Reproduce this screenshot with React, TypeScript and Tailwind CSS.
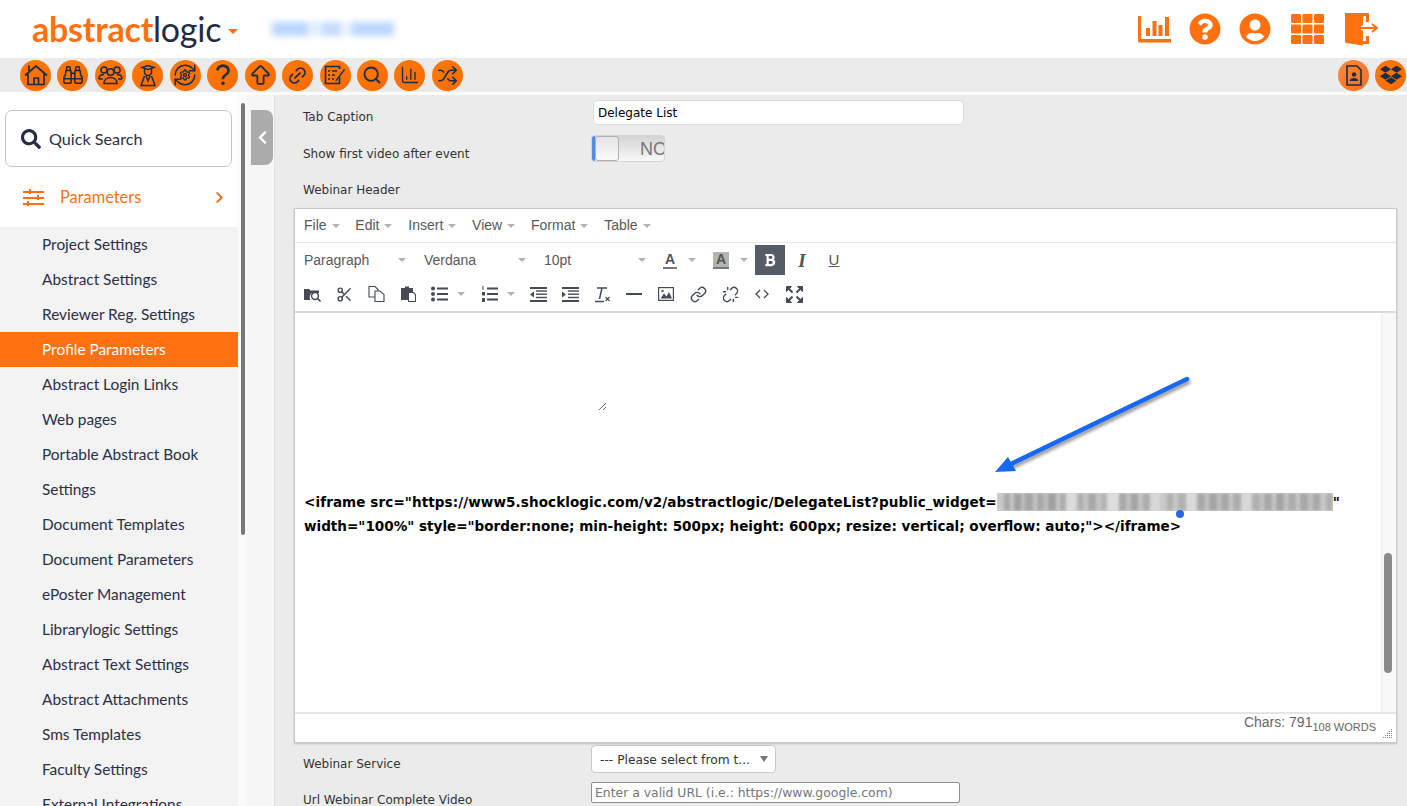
import {
  ArrowBigUp,
  BarChart3,
  Binoculars,
  Link,
  Link2,
  RefreshCw,
  Scissors,
  Search,
  Settings,
  Shuffle,
  Unlink,
} from "lucide-react";
import { FaBold, FaChevronLeft, FaChevronRight, FaDropbox, FaQuestionCircle, FaSearch, FaUserCircle } from "react-icons/fa";
import type { ReactNode } from "react";

const sidebarItems = [
  "Project Settings",
  "Abstract Settings",
  "Reviewer Reg. Settings",
  "Profile Parameters",
  "Abstract Login Links",
  "Web pages",
  "Portable Abstract Book",
  "Settings",
  "Document Templates",
  "Document Parameters",
  "ePoster Management",
  "Librarylogic Settings",
  "Abstract Text Settings",
  "Abstract Attachments",
  "Sms Templates",
  "Faculty Settings",
  "External Integrations",
];

// blurred-out widget id: [width, shade]
const redaction = [
  [6, "bg-[#c8c8c8]"], [4, "bg-[#a8a8a8]"], [3, "bg-[#c8c8c8]"], [5, "bg-[#a0a0a0]"], [3, "bg-[#bebebe]"], [6, "bg-[#a4a4a4]"],
  [3, "bg-[#c4c4c4]"], [5, "bg-[#a8a8a8]"], [3, "bg-[#c0c0c0]"], [6, "bg-[#a0a0a0]"], [3, "bg-[#c8c8c8]"], [4, "bg-[#acacac]"],
  [10, "bg-[#dcdcdc]"], [5, "bg-[#b0b0b0]"], [3, "bg-[#c8c8c8]"], [6, "bg-[#a8a8a8]"], [3, "bg-[#c4c4c4]"], [5, "bg-[#b4b4b4]"],
  [10, "bg-[#dedede]"], [6, "bg-[#a8a8a8]"], [3, "bg-[#c0c0c0]"], [6, "bg-[#a4a4a4]"], [3, "bg-[#c4c4c4]"], [6, "bg-[#acacac]"],
  [8, "bg-[#d8d8d8]"], [6, "bg-[#c8c8c8]"], [4, "bg-[#b0b0b0]"], [4, "bg-[#c8c8c8]"], [6, "bg-[#b0b0b0]"], [10, "bg-[#dadada]"],
  [6, "bg-[#a8a8a8]"], [3, "bg-[#c4c4c4]"], [6, "bg-[#a4a4a4]"], [3, "bg-[#c0c0c0]"], [6, "bg-[#a8a8a8]"], [3, "bg-[#c8c8c8]"],
  [6, "bg-[#acacac]"], [10, "bg-[#d8d8d8]"], [6, "bg-[#b0b0b0]"], [3, "bg-[#c4c4c4]"], [6, "bg-[#a8a8a8]"], [3, "bg-[#c8c8c8]"],
  [6, "bg-[#a4a4a4]"], [3, "bg-[#c4c4c4]"], [6, "bg-[#acacac]"], [3, "bg-[#c8c8c8]"], [6, "bg-[#a8a8a8]"], [3, "bg-[#c0c0c0]"],
  [6, "bg-[#a8a8a8]"], [4, "bg-[#c8c8c8]"], [6, "bg-[#b0b0b0]"],
];

function Round({ children, light }: { children: ReactNode; light?: boolean }) {
  return (
    <div
      className={`flex h-[31px] w-[31px] shrink-0 items-center justify-center rounded-full text-[#1f2a44] ${
        light ? "bg-gradient-to-br from-[#ff8a3c] to-[#f0701f]" : "bg-gradient-to-br from-[#ff7a0a] to-[#f56a00]"
      }`}
    >
      {children}
    </div>
  );
}

function HouseIcon() {
  return (
    <svg width="24" height="22" viewBox="0 0 24 22" fill="none" stroke="currentColor" strokeWidth="1.700" strokeLinejoin="round">
      <path d="M1 11.500 12 2l11 9.500" />
      <path d="M4 9V20.500h16V9" />
      <path d="M5 7V1.500" />
      <path d="M10 20.500V14h4.500v6.500" />
    </svg>
  );
}

function PeopleIcon() {
  return (
    <svg width="25" height="20" viewBox="0 0 25 20" fill="none" stroke="currentColor" strokeWidth="1.600">
      <circle cx="6" cy="5" r="3" />
      <circle cx="19" cy="5" r="3" />
      <circle cx="12.500" cy="7" r="3.300" />
      <path d="M1 14c0-3 2-4.500 5-4.500M24 14c0-3-2-4.500-5-4.500" />
      <path d="M1 14h4M20 14h4" />
      <path d="M6 18.500c0-4 3-6 6.500-6s6.500 2 6.500 6z" />
    </svg>
  );
}

function GradIcon() {
  return (
    <svg width="20" height="23" viewBox="0 0 20 23" fill="none" stroke="currentColor" strokeWidth="1.500">
      <path d="M4 3.500 10 1.500l6 2-6 2z" />
      <path d="M6.500 5v3a3.500 3.500 0 0 0 7 0V5" />
      <path d="M6.500 12 3 21.500h14L13.500 12M8 12l2 5 2-5" />
    </svg>
  );
}

function CogRefresh() {
  return (
    <div className="relative flex h-6 w-6 items-center justify-center">
      <RefreshCw size={26} strokeWidth={1.4} className="absolute -left-[1px] -top-[1px]" />
      <Settings size={12} strokeWidth={2.8} />
    </div>
  );
}

function NoteIcon() {
  return (
    <svg width="22" height="20" viewBox="0 0 22 20" fill="none" stroke="currentColor" strokeWidth="1.600">
      <path d="M15.500 12v6.500H1.500V1.500h14V4" />
      <path d="M4 6h2M8 6h5M4 10h2M8 10h3M4 14h2M8 14h2" />
      <path d="M12 14.500 20 4l1 1-8 10.500-2 1z" fill="currentColor" stroke="none" />
    </svg>
  );
}

function QuestionMark() {
  return (
    <svg width="16" height="22" viewBox="0 0 16 22" fill="none" stroke="currentColor" strokeWidth="2.500">
      <path d="M2.500 6.500a5.500 4.800 0 1 1 8.500 4c-2 1.200-3 2.200-3 4.700" />
      <circle cx="8" cy="19.300" r="1.700" fill="currentColor" stroke="none" />
    </svg>
  );
}

function Caret({ className = "" }: { className?: string }) {
  return <span className={`inline-block h-0 w-0 border-x-[4px] border-t-[4px] border-x-transparent border-t-[#b3b3b3] ${className}`} />;
}

function ToolBtn({ children }: { children: ReactNode }) {
  return <div className="flex h-[30px] w-[32px] shrink-0 items-center justify-center text-[#444b55]">{children}</div>;
}

function FolderSearch() {
  return (
    <svg width="17" height="15" viewBox="0 0 17 15">
      <path d="M0 2h5l1.500 1.500H15V6H8a5 5 0 0 0-1.500 7H0z" fill="#444b55" />
      <circle cx="11" cy="9" r="3.400" fill="none" stroke="#444b55" strokeWidth="1.500" />
      <path d="m13.500 11.500 3 3" stroke="#444b55" strokeWidth="1.700" />
    </svg>
  );
}

function CopyIcon() {
  return (
    <svg width="17" height="16" viewBox="0 0 17 16" fill="#fff" stroke="#444b55" strokeWidth="1.100">
      <path d="M1 .5h6l3 3V11H1z" />
      <path d="M7 5h5l4 3.500v7H7z" />
    </svg>
  );
}

function PasteIcon() {
  return (
    <svg width="15" height="16" viewBox="0 0 15 16">
      <path d="M0 2h4V.5h4V2h4v4H7v8H0z" fill="#444b55" />
      <path d="M7.500 6.500h5l2 2v7h-7z" fill="#fff" stroke="#444b55" strokeWidth="1.100" />
    </svg>
  );
}

function BulletList() {
  return (
    <svg width="17" height="16" viewBox="0 0 17 16" fill="#444b55">
      <circle cx="2" cy="2.500" r="2" />
      <circle cx="2" cy="8" r="2" />
      <circle cx="2" cy="13.500" r="2" />
      <rect x="6" y="1.500" width="11" height="2" />
      <rect x="6" y="7" width="11" height="2" />
      <rect x="6" y="12.500" width="11" height="2" />
    </svg>
  );
}

function NumberList() {
  return (
    <svg width="17" height="16" viewBox="0 0 17 16" fill="#444b55">
      <rect x="1.500" y="0" width="1" height="4" />
      <rect x="1" y="6" width="3" height="3.500" />
      <rect x="1" y="12" width="3" height="4" />
      <rect x="6" y="1.500" width="11" height="2" />
      <rect x="6" y="7" width="11" height="2" />
      <rect x="6" y="12.500" width="11" height="2" />
    </svg>
  );
}

function IndentIcon({ out }: { out?: boolean }) {
  return (
    <svg width="17" height="15" viewBox="0 0 17 15" fill="#444b55">
      <rect x="0" y="0" width="17" height="2" />
      <rect x="6" y="3.300" width="11" height="1.400" />
      <rect x="6" y="6.500" width="11" height="1.400" />
      <rect x="6" y="9.800" width="11" height="1.400" />
      <rect x="0" y="13" width="17" height="2" />
      <path d={out ? "M4 4.500v6l-4-3z" : "M0 4.500v6l4-3z"} />
    </svg>
  );
}

function ClearFormat() {
  return (
    <svg width="17" height="17" viewBox="0 0 17 17" fill="none" stroke="#444b55" strokeWidth="1.500">
      <path d="M3 2h10M8 2 5.500 13" />
      <path d="M1 15.500h9" />
      <path d="m11.500 11 4 4m0-4-4 4" strokeWidth="1.200" />
    </svg>
  );
}

function PictureIcon() {
  return (
    <svg width="16" height="14" viewBox="0 0 16 14">
      <rect x=".6" y=".6" width="14.800" height="12.800" fill="none" stroke="#444b55" strokeWidth="1.200" />
      <path d="M2.500 11.500 6 6.500l2.500 3 2.500-4.500 3 6.500z" fill="#444b55" />
      <circle cx="4.500" cy="4" r="1.200" fill="#444b55" />
    </svg>
  );
}

function CodeIcon() {
  return (
    <svg width="14" height="10" viewBox="0 0 14 10" fill="none" stroke="#444b55" strokeWidth="1.300">
      <path d="M5 1 1 5l4 4M9 1l4 4-4 4" />
    </svg>
  );
}

function FullscreenIcon() {
  return (
    <svg width="17" height="17" viewBox="0 0 17 17" fill="#444b55" stroke="#444b55">
      <path d="M.5.500h5l-5 5z" />
      <path d="M16.500.500h-5l5 5z" />
      <path d="M.5 16.500h5l-5-5z" />
      <path d="M16.500 16.500h-5l5-5z" />
      <path d="m3 3 3.500 3.500M14 3l-3.500 3.500M3 14l3.500-3.500M14 14l-3.500-3.500" strokeWidth="2" />
    </svg>
  );
}

function GridIcon() {
  return (
    <svg width="33" height="30" viewBox="0 0 33 30" fill="#ff7110">
      {[0, 11.500, 23].map((x) =>
        [0, 10.500, 21].map((y) => <rect key={`${x}-${y}`} x={x} y={y} width="10" height="9" rx="1.200" />),
      )}
    </svg>
  );
}

function Door() {
  return (
    <svg width="33" height="33" viewBox="0 0 33 33" fill="#ff7110">
      <path d="M0 0h24v9h-3V3l-3 .5V28h3v-5h3v8h-6v1.500L1 30l-1-1z" />
      <path d="M0 0h18v32L0 29z" />
      <path d="M16 13h15M27 9l5 4-5 4" transform="translate(0 2)" fill="none" stroke="#fff" strokeWidth="5" />
      <path d="M16 13h15M27 9l5 4-5 4" transform="translate(0 2)" fill="none" stroke="#ff7110" strokeWidth="2" />
    </svg>
  );
}

function BarsIcon() {
  return (
    <svg width="33" height="27" viewBox="0 0 33 27" fill="#ff7110">
      <path d="M0 0h3v23h30v3.500H1.500A1.500 1.500 0 0 1 0 25z" />
      <rect x="8" y="12" width="4" height="8" />
      <rect x="14.500" y="5" width="4" height="15" />
      <rect x="20.500" y="9" width="4" height="11" />
      <rect x="27" y="1" width="4" height="19" />
    </svg>
  );
}

function SlidersIcon() {
  return (
    <svg width="21" height="17" viewBox="0 0 21 17" fill="#ff7110">
      <rect x="0" y="2" width="21" height="2" />
      <rect x="0" y="8" width="21" height="2" />
      <rect x="0" y="14" width="21" height="2" />
      <rect x="6" y="0" width="2" height="5" />
      <rect x="14" y="6" width="2" height="5" />
      <rect x="4" y="12" width="2" height="5" />
    </svg>
  );
}

function MenuItem({ label }: { label: string }) {
  return (
    <div className="flex items-center gap-[5px]">
      <span>{label}</span>
      <Caret />
    </div>
  );
}

export default function App() {
  return (
    <div className="flex h-[806px] w-[1407px] flex-col overflow-hidden bg-white font-['Lato',sans-serif]">
      {/* Header */}
      <header className="flex h-[58px] shrink-0 items-center justify-between bg-white pl-[32px] pr-[29px]">
        <div className="flex items-center">
          <div className="text-[34px] leading-none tracking-[-0.23px]">
            <span className="font-bold text-[#ff7110]">abstract</span>
            <span className="text-[#232b45]">logic</span>
          </div>
          <span className="ml-[7px] mt-[4px] h-0 w-0 border-x-[5px] border-t-[5px] border-x-transparent border-t-[#ff7110]" />
          <div className="ml-[34px] flex h-[14px] w-[122px] gap-[2px] blur-[3px]">
            <div className="w-[36px] bg-[#b9d5ff]" />
            <div className="w-[10px] bg-[#dbe9ff]" />
            <div className="w-[20px] bg-[#c3dbff]" />
            <div className="w-[6px] bg-[#e3eeff]" />
            <div className="w-[44px] bg-[#bdd7ff]" />
          </div>
        </div>
        <div className="flex items-center text-[#ff7110]">
          <BarsIcon />
          <FaQuestionCircle size={32} className="ml-[18px]" />
          <FaUserCircle size={32} className="ml-[18px]" />
          <div className="ml-[20px]"><GridIcon /></div>
          <div className="ml-[21px]"><Door /></div>
        </div>
      </header>

      {/* Shortcut bar */}
      <div className="flex h-[34px] shrink-0 items-center justify-between bg-[#ebebeb] pl-[20px] pr-[1px]">
        <div className="flex items-center gap-[6.45px]">
          <Round><HouseIcon /></Round>
          <Round><Binoculars size={22} strokeWidth={1.7} /></Round>
          <Round><PeopleIcon /></Round>
          <Round><GradIcon /></Round>
          <Round><CogRefresh /></Round>
          <Round><QuestionMark /></Round>
          <Round><ArrowBigUp size={25} strokeWidth={1.7} /></Round>
          <Round><Link2 size={21} strokeWidth={2} className="-rotate-45" /></Round>
          <Round><NoteIcon /></Round>
          <Round><Search size={20} strokeWidth={2.2} /></Round>
          <Round><BarChart3 size={20} strokeWidth={1.6} /></Round>
          <Round><Shuffle size={21} strokeWidth={1.8} /></Round>
        </div>
        <div className="flex items-center gap-[6px]">
          <Round light>
            <svg width="16" height="21" viewBox="0 0 16 21" fill="none" stroke="currentColor" strokeWidth="1.600">
              <path d="M1 1h10l4 4v15H1z" />
              <circle cx="8" cy="9.500" r="2.200" fill="currentColor" stroke="none" />
              <path d="M3.500 16c.5-4 8.500-4 9 0z" fill="currentColor" stroke="none" />
            </svg>
          </Round>
          <Round><FaDropbox size={22} /></Round>
        </div>
      </div>
      <div className="h-[3px] shrink-0 bg-white" />

      <div className="flex min-h-0 flex-1">
        {/* Sidebar */}
        <aside className="w-[238px] shrink-0 overflow-hidden bg-white">
          <div className="pl-[5px] pr-[6px] pt-[15px]">
            <div className="flex h-[57px] items-center rounded-[7px] border border-[#c4c4c4] pl-[15px] text-[16.2px] text-[#2a3048]">
              <FaSearch size={20} className="text-[#232b45]" />
              <span className="ml-[8px] pt-[2px]">Quick Search</span>
            </div>
          </div>
          <div className="flex h-[60px] items-center pl-[23px] pr-[12px] text-[16.4px] text-[#ff7110]">
            <SlidersIcon />
            <span className="ml-[16px] flex-1">Parameters</span>
            <FaChevronRight size={13} />
          </div>
          <nav className="bg-[#f3f3f3] text-[15.4px] text-[#2a3048]">
            {sidebarItems.map((item) => (
              <div
                key={item}
                className={`flex h-[35px] items-center pl-[42px] ${item === "Profile Parameters" ? "bg-[#ff7110] text-white" : ""}`}
              >
                {item}
              </div>
            ))}
          </nav>
        </aside>

        {/* Sidebar scrollbar */}
        <div className="w-[9px] shrink-0 bg-[#fafafa] pl-[3px] pt-[8px]">
          <div className="h-[432px] w-[4px] rounded-full bg-[#777777]" />
        </div>

        {/* Collapse strip */}
        <div className="w-[28px] shrink-0 border-r border-[#e2e2e2] bg-[#f6f6f6] pl-[4px] pt-[15px]">
          <div className="flex h-[55px] w-[22px] items-center justify-center rounded-r-[8px] bg-[#ababab] text-white">
            <FaChevronLeft size={15} />
          </div>
        </div>

        {/* Form */}
        <main className="relative min-w-0 flex-1 bg-[#ebebeb] pl-[19px] pr-[10px] pt-[5px] font-['DejaVu_Sans',sans-serif] text-[12px] text-[#333333]">
          <div className="flex h-[25px]">
            <label className="w-[299px] pt-[9px] pl-[9px] leading-[16px]">Tab Caption</label>
            <div className="flex h-[25px] w-[371px] items-center rounded-[5px] border border-[#dcdcdc] bg-white pl-[4px] pt-[1px] text-black">
              Delegate List
            </div>
          </div>

          <div className="mt-[10px] flex h-[27px]">
            <label className="w-[297px] pl-[9px] pt-[11px] leading-[16px]">Show first video after event</label>
            <div className="flex h-[27px] w-[74px] overflow-hidden rounded-[4px] border border-[#d4d4d4] bg-gradient-to-b from-[#d4d4d4] to-[#f8f8f8]">
              <div className="w-[3px] shrink-0 bg-[#4a90e2]" />
              <div className="w-[24px] shrink-0 rounded-[3px] border border-[#b0b0b0] bg-gradient-to-b from-[#e4e4e4] to-[#fafafa]" />
              <span className="ml-[21px] font-['Liberation_Sans',sans-serif] text-[18px] leading-[26px] text-[#777777]">NO</span>
            </div>
          </div>

          <label className="mt-[20px] block h-[26px] pl-[9px] leading-[16px]">Webinar Header</label>

          {/* Editor */}
          <section className="flex h-[535px] flex-col border border-[#c8c8c8] bg-white font-['Liberation_Sans',sans-serif] text-[14px] text-[#595959] shadow-[0_1px_2px_rgba(0,0,0,0.2)]">
            <div className="flex h-[34px] shrink-0 items-center gap-[15.8px] border-b border-[#e8e8e8] pl-[9px]">
              <MenuItem label="File" />
              <MenuItem label="Edit" />
              <MenuItem label="Insert" />
              <MenuItem label="View" />
              <MenuItem label="Format" />
              <MenuItem label="Table" />
            </div>

            <div className="shrink-0 border-b-2 border-[#dcdcdc]">
              <div className="flex h-[34px] items-center pl-[9px]">
                <div className="flex w-[120px] items-center justify-between pr-[18px]"><span>Paragraph</span><Caret /></div>
                <div className="flex w-[120px] items-center justify-between pr-[18px]"><span>Verdana</span><Caret /></div>
                <div className="flex w-[112px] items-center justify-between pr-[10px]"><span>10pt</span><Caret /></div>
                <div className="ml-[7px] flex w-[50px] items-center">
                  <span className="border-b-2 border-[#777] px-[2px] text-[14px] font-bold leading-[15px] text-[#555]">A</span>
                  <Caret className="ml-[11px]" />
                </div>
                <div className="flex w-[42px] items-center">
                  <span className="border-b-2 border-[#777] bg-[#b3b3b3] px-[3px] text-[14px] font-bold leading-[15px] text-[#555]">A</span>
                  <Caret className="ml-[11px]" />
                </div>
                <div className="flex h-[30px] w-[30px] items-center justify-center bg-[#555c66] text-white"><FaBold size={14} /></div>
                <span className="w-[34px] text-center font-['Liberation_Serif',serif] text-[19px] font-bold italic leading-none text-[#555]">I</span>
                <span className="w-[30px] text-center text-[15px] text-[#555] underline">U</span>
              </div>
              <div className="flex h-[34px] items-center pl-[1px]">
                <ToolBtn><FolderSearch /></ToolBtn>
                <ToolBtn><Scissors size={17} /></ToolBtn>
                <ToolBtn><CopyIcon /></ToolBtn>
                <ToolBtn><PasteIcon /></ToolBtn>
                <div className="flex w-[50px] items-center pl-[7px]"><BulletList /><Caret className="ml-[9px]" /></div>
                <div className="flex w-[48px] items-center pl-[7px]"><NumberList /><Caret className="ml-[9px]" /></div>
                <ToolBtn><IndentIcon out /></ToolBtn>
                <ToolBtn><IndentIcon /></ToolBtn>
                <ToolBtn><ClearFormat /></ToolBtn>
                <ToolBtn><span className="h-[2px] w-[16px] bg-[#444b55]" /></ToolBtn>
                <ToolBtn><PictureIcon /></ToolBtn>
                <ToolBtn><Link size={17} /></ToolBtn>
                <ToolBtn><Unlink size={17} /></ToolBtn>
                <ToolBtn><CodeIcon /></ToolBtn>
                <ToolBtn><FullscreenIcon /></ToolBtn>
              </div>
            </div>

            <div className="relative flex min-h-0 flex-1">
              <div className="relative flex-1 pl-[9px] pt-[177px] font-['DejaVu_Sans',sans-serif] text-[13.55px] font-bold leading-[24px] text-black">
                {/* textarea grip */}
                <svg width="9" height="9" viewBox="0 0 9 9" className="absolute left-[303px] top-[89px]" stroke="#666">
                  <path d="M1 8 8 1M5 8l3-3" />
                </svg>
                <div className="flex items-center whitespace-nowrap">
                  <span className="tracking-[0.08px]">&lt;iframe src="https://www5.shocklogic.com/v2/abstractlogic/DelegateList?public_widget=</span>
                  <div className="flex h-[18px] w-[336px] overflow-hidden bg-[#d8d8d8]">
                    <div className="flex h-full w-full blur-[1.5px]">
                      {redaction.map(([width, shade], i) => (
                        <div key={i} className={`h-full grow ${shade}`} style={{ width: `${width}px` }} />
                      ))}
                    </div>
                  </div>
                  <span>"</span>
                </div>
                <div className="whitespace-nowrap">
                  width="100%" style="border:none; min-height: 500px; height: 600px; resize: vertical; overflow: auto;"&gt;&lt;/iframe&gt;
                </div>
                <span className="absolute left-[881px] top-[197px] h-[8px] w-[8px] rounded-full bg-[#2469e0]" />
              </div>
              <div className="w-[15px] shrink-0 border-l border-[#eeeeee] bg-[#f8f8f8] pl-[2px] pt-[240px]">
                <div className="h-[120px] w-[8px] rounded-full bg-[#8a8a8a]" />
              </div>

              {/* Annotation arrow */}
              <svg width="210" height="110" viewBox="0 0 210 110" className="absolute left-[696px] top-[60px]">
                <path d="M196 7 20 92" stroke="#444" strokeOpacity="0.5" strokeWidth="5" strokeLinecap="round" transform="translate(1 2)" className="blur-[1.5px]" />
                <path d="M196 6 20 91" stroke="#1668f5" strokeWidth="4.500" strokeLinecap="round" />
                <path d="m4 99 21-1-8-14z" fill="#1668f5" />
              </svg>
            </div>

            <div className="relative flex h-[30px] shrink-0 justify-end border-t-2 border-[#e5e5e5] pr-[20px] text-[#666]">
              <span className="text-[14px] leading-[16px]">Chars: 791</span>
              <span className="mt-[5px] text-[11px] leading-[16px]">108 WORDS</span>
              <svg width="10" height="10" viewBox="0 0 10 10" className="absolute bottom-[3px] right-[3px]" fill="#888">
                <rect x="8" y="0" width="1" height="1" /><rect x="6" y="2" width="1" height="1" /><rect x="8" y="2" width="1" height="1" />
                <rect x="4" y="4" width="1" height="1" /><rect x="6" y="4" width="1" height="1" /><rect x="8" y="4" width="1" height="1" />
                <rect x="2" y="6" width="1" height="1" /><rect x="4" y="6" width="1" height="1" /><rect x="6" y="6" width="1" height="1" /><rect x="8" y="6" width="1" height="1" />
                <rect x="0" y="8" width="1" height="1" /><rect x="2" y="8" width="1" height="1" /><rect x="4" y="8" width="1" height="1" /><rect x="6" y="8" width="1" height="1" /><rect x="8" y="8" width="1" height="1" />
              </svg>
            </div>
          </section>

          <div className="mt-[2px] flex h-[28px]">
            <label className="w-[297px] pl-[9px] pt-[11px] leading-[16px]">Webinar Service</label>
            <div className="flex h-[28px] w-[185px] items-center justify-between rounded-[4px] border border-[#c8c8c8] bg-white pl-[8px] pr-[7px] text-[12.25px]">
              <span className="pt-[3px]">--- Please select from t...</span>
              <span className="h-0 w-0 border-x-[4px] border-t-[6px] border-x-transparent border-t-[#777]" />
            </div>
          </div>

          <div className="mt-[9px] flex h-[21px]">
            <label className="w-[297px] pl-[9px] pt-[10px] leading-[16px]">Url Webinar Complete Video</label>
            <div className="flex h-[21px] w-[369px] items-center rounded-[2px] border border-[#8f8f8f] bg-white pl-[3px] pt-[1px] text-[12.4px] text-[#757575]">
              Enter a valid URL (i.e.: https://www.google.com)
            </div>
          </div>
        </main>
      </div>
    </div>
  );
}
